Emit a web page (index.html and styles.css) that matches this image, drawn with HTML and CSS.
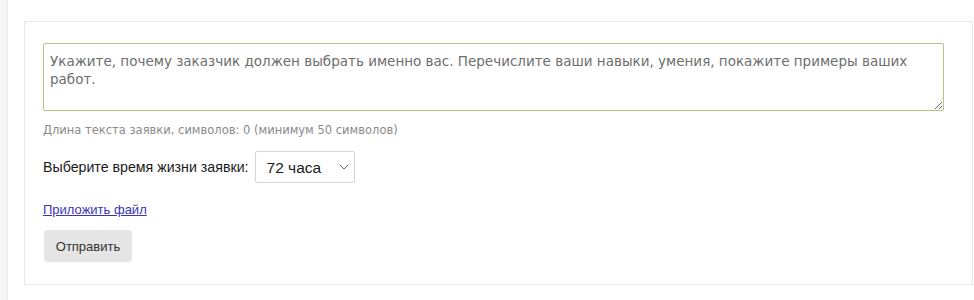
FILE: index.html
```html
<!DOCTYPE html>
<html>

<head>
    <title>Отклик на заказ</title>
    <link rel="stylesheet" href="styles.css">
</head>

<body>
    <div class="layout">
        <div class="sidebar"></div>
        <div class="content">
            <div class="card">
                <textarea class="offer-text" placeholder="Укажите, почему заказчик должен выбрать именно вас. Перечислите ваши навыки, умения, покажите примеры ваших работ."></textarea>
                <div class="counter">Длина текста заявки, символов: 0 (минимум 50 символов)</div>

                <div class="lifetime">
                    <label for="lifetime">Выберите время жизни заявки:</label>
                    <div class="select-wrap">
                        <select id="lifetime">
                            <option>24 часа</option>
                            <option>48 часов</option>
                            <option selected>72 часа</option>
                        </select>
                        <svg class="chevron" width="10" height="6" viewBox="0 0 10 6" fill="none" stroke="#666" stroke-width="1">
                            <path d="M1 1l4 4 4-4" />
                        </svg>
                    </div>
                </div>

                <a href="#" class="attach">Приложить файл</a>

                <button class="btn-send">Отправить</button>
            </div>
        </div>
    </div>
</body>

</html>
```

FILE: styles.css
```css
:root {
    --border: #e6e6e6;
    --field-border: #b3c485;
    --text: #1a1a1a;
    --text-muted: #8a8a8a;
    --link: #3a35b8;
}

* {
    margin: 0;
    padding: 0;
    box-sizing: border-box;
}

body {
    background: white;
    color: var(--text);
    font-family: "Liberation Sans", Arial, sans-serif;
}

.layout {
    display: flex;
    min-height: 300px;
}

.sidebar {
    width: 8px;
    background: #f5f5f5;
    border-right: 1px solid #ebebeb;
}

.content {
    flex: 1;
    padding: 21px 1px 0 16px;
}

.card {
    border: 1px solid var(--border);
    padding: 21px 28px 22px 18px;
    display: flex;
    flex-direction: column;
    align-items: flex-start;
}

.offer-text {
    display: block;
    width: 100%;
    height: 68px;
    padding: 8px 6px;
    border: 1px solid var(--field-border);
    border-radius: 2px;
    font-family: "DejaVu Sans", Verdana, sans-serif;
    font-size: 13.5px;
    line-height: 18px;
    color: var(--text);
    resize: vertical;
}

.offer-text::placeholder {
    color: #6e6e6e;
}

.offer-text:focus {
    outline: none;
}

.counter {
    margin-top: 12px;
    font-family: "DejaVu Sans", Verdana, sans-serif;
    font-size: 11.5px;
    color: var(--text-muted);
}

.lifetime {
    display: flex;
    align-items: center;
    gap: 6px;
    margin-top: 14px;
    font-size: 14.2px;
}

.select-wrap {
    position: relative;
}

.select-wrap select {
    width: 100px;
    height: 32px;
    padding: 0 20px 0 11px;
    border: 1px solid #d4d4d4;
    border-radius: 2px;
    background: white;
    font-family: "Liberation Sans", Arial, sans-serif;
    font-size: 15.5px;
    color: var(--text);
    appearance: none;
    -webkit-appearance: none;
}

.chevron {
    position: absolute;
    right: 6px;
    top: 13px;
    pointer-events: none;
}

.attach {
    margin-top: 19px;
    font-size: 13px;
    color: var(--link);
}

.btn-send {
    margin-top: 13px;
    margin-left: 1px;
    width: 88px;
    height: 32px;
    border: none;
    border-radius: 3px;
    background: #e5e5e5;
    font-family: "Liberation Sans", Arial, sans-serif;
    font-size: 13px;
    color: #333;
    cursor: pointer;
}
```
